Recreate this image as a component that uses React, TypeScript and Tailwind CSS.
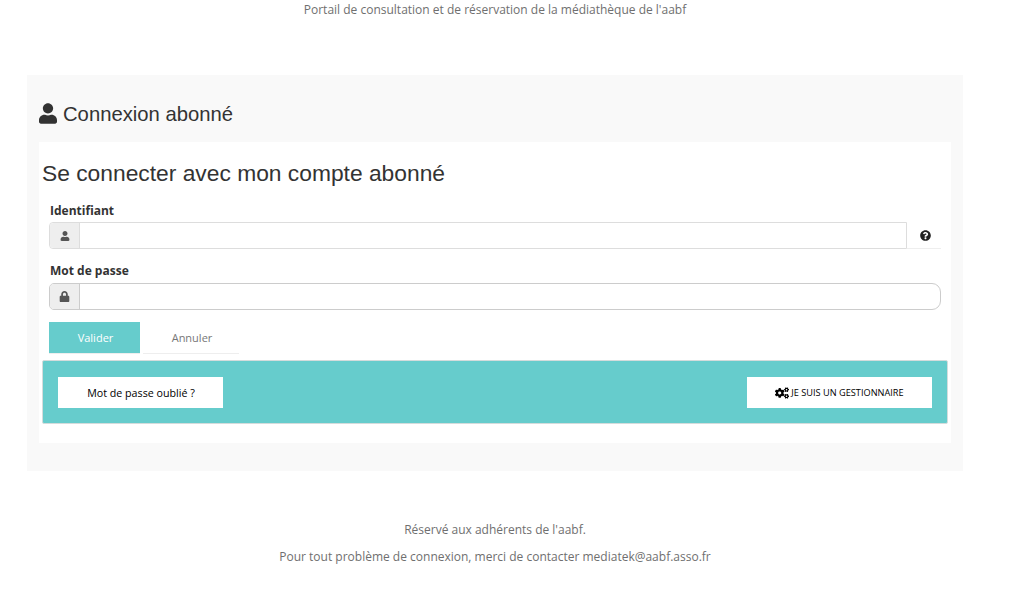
import { FaUser, FaLock, FaQuestionCircle, FaCogs } from "react-icons/fa";

const os = "font-['Open_Sans',sans-serif]";
const ar = "font-['Liberation_Sans',Arial,sans-serif]";

export default function App() {
  return (
    <div className={`w-[1023px] h-[600px] bg-white overflow-hidden text-[#777] ${os}`}>
      <div className="w-[990px]">
        <p className="h-[75px] pt-[1px] text-center text-[12px] leading-[18px] text-[#6f6f6f]">
          Portail de consultation et de réservation de la médiathèque de l'aabf
        </p>
        <main className="ml-[27px] w-[936px] h-[396px] bg-[#f9f9f9] px-[12px]">
          <h1 className={`h-[67px] pt-[25px] flex items-start gap-[6px] text-[20.25px] leading-[28px] text-[#333] ${ar}`}>
            <FaUser className="w-[18px] h-[21px] mt-[3px] text-[#333]" />
            Connexion abonné
          </h1>
          <section className="h-[301px] bg-white pt-[16px]">
            <h2 className={`pl-[3px] text-[22.8px] leading-[30px] text-[#333] ${ar}`}>
              Se connecter avec mon compte abonné
            </h2>
            <div className="mt-[13px] px-[10px]">
              <label className="block h-[21px] pl-[1px] text-[12px] leading-[20px] font-bold text-[#333]">Identifiant</label>
              <div className="flex h-[27px]">
                <div className="flex w-[858px] border border-[#ddd] rounded-l-[4px]">
                  <span className="flex w-[30px] items-center justify-center bg-[#eee] border-r border-[#ddd] rounded-l-[4px]">
                    <FaUser className="w-[10px] h-[10px] text-[#555]" />
                  </span>
                </div>
                <span className="flex w-[34px] items-center justify-center border-b border-[#eee]">
                  <FaQuestionCircle className="w-[11px] h-[11px] text-[#222] ml-[3px]" />
                </span>
              </div>
              <label className="block mt-[12px] h-[22px] pl-[1px] text-[12px] leading-[20px] font-bold text-[#333]">Mot de passe</label>
              <div className="flex h-[27px] border border-[#ccc] rounded-l-[5px] rounded-r-[9px] overflow-hidden">
                <span className="flex w-[30px] items-center justify-center bg-[#eee] border-r border-[#ccc]">
                  <FaLock className="w-[11px] h-[11px] text-[#555]" />
                </span>
              </div>
              <div className="mt-[12px] flex gap-[3px]">
                <button className="h-[32px] w-[91px] pl-[2px] pt-[1px] bg-[#66cccc] text-white text-[11px] border-b border-[#eee]">Valider</button>
                <button className="h-[32px] w-[96px] pl-[2px] pt-[1px] bg-white text-[#777] text-[11px] border-b border-[#eee]">Annuler</button>
              </div>
            </div>
            <div className="mt-[6px] mx-[3px] h-[64px] flex items-center justify-between px-[15px] bg-[#66cccc] border border-[#d4dcdc] rounded-[2px]">
              <button className="h-[31px] w-[165px] pl-[1px] pt-[2px] bg-white text-black text-[10.7px]">Mot de passe oublié ?</button>
              <button className="h-[31px] w-[185px] pt-[1px] bg-white text-black text-[9.2px] flex items-center justify-center gap-[2px]">
                <FaCogs className="w-[14px] h-[12px]" />
                JE SUIS UN GESTIONNAIRE
              </button>
            </div>
          </section>
        </main>
        <p className="mt-[50px] text-center text-[12px] leading-[18px] text-[#6f6f6f]">Réservé aux adhérents de l'aabf.</p>
        <p className="mt-[9px] text-center text-[12px] leading-[18px] text-[#6f6f6f]">
          Pour tout problème de connexion, merci de contacter mediatek@aabf.asso.fr
        </p>
      </div>
    </div>
  );
}
